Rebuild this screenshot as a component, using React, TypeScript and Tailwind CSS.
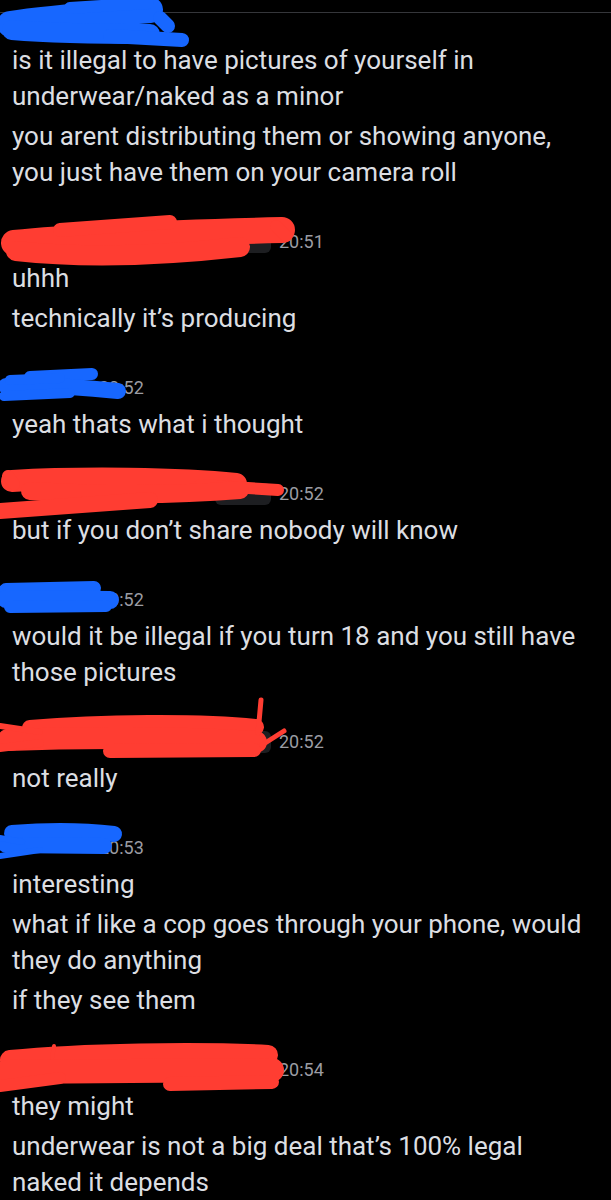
import React from "react";

type Group = {
  tone: "blue" | "red";
  time: string;
  // each message is a list of display lines
  messages: string[][];
};

const groups: Group[] = [
  {
    tone: "blue",
    time: "",
    messages: [
      ["is it illegal to have pictures of yourself in", "underwear/naked as a minor"],
      ["you arent distributing them or showing anyone,", "you just have them on your camera roll"],
    ],
  },
  {
    tone: "red",
    time: "20:51",
    messages: [["uhhh"], ["technically it\u2019s producing"]],
  },
  {
    tone: "blue",
    time: "20:52",
    messages: [["yeah thats what i thought"]],
  },
  {
    tone: "red",
    time: "20:52",
    messages: [["but if you don\u2019t share nobody will know"]],
  },
  {
    tone: "blue",
    time: "20:52",
    messages: [["would it be illegal if you turn 18 and you still have", "those pictures"]],
  },
  {
    tone: "red",
    time: "20:52",
    messages: [["not really"]],
  },
  {
    tone: "blue",
    time: "20:53",
    messages: [
      ["interesting"],
      ["what if like a cop goes through your phone, would", "they do anything"],
      ["if they see them"],
    ],
  },
  {
    tone: "red",
    time: "20:54",
    messages: [["they might"], ["underwear is not a big deal that\u2019s 100% legal", "naked it depends"]],
  },
];

function Header({ tone, time, first }: { tone: "blue" | "red"; time: string; first: boolean }) {
  if (first) return <div className="h-[29px]" />;
  return (
    <div className="flex h-[37px] items-center">
      {tone === "blue" ? (
        <div className="w-[99px] shrink-0" />
      ) : (
        <div className="flex w-[279px] shrink-0 items-center justify-end pr-[8px]">
          <span className="h-[22px] w-[56px] rounded-[6px] bg-[#1d1e21]" />
        </div>
      )}
      <span className="text-[18px] leading-none text-[#9b9ca3]">{time}</span>
    </div>
  );
}

// Marker strokes drawn over the names
function Scribbles() {
  const blue = "#1767ff";
  const red = "#ff3d32";
  const s = { fill: "none", strokeLinecap: "round" as const, strokeLinejoin: "round" as const };
  return (
    <svg className="pointer-events-none absolute left-0 top-0" width={611} height={1200} viewBox="0 0 611 1200">
      {/* top */}
      <g stroke={blue} {...s}>
        <path d="M10 24 C50 18 100 14 150 10" strokeWidth={26} />
        <path d="M70 8 L148 3" strokeWidth={12} />
        <path d="M12 30 C60 34 110 34 150 34" strokeWidth={20} />
        <path d="M110 36 L182 40" strokeWidth={14} />
        <path d="M160 18 L168 26" strokeWidth={14} />
      </g>
      {/* 20:51 */}
      <g stroke={red} {...s}>
        <path d="M14 243 C80 236 200 232 282 230" strokeWidth={26} />
        <path d="M16 251 C80 258 160 256 240 247" strokeWidth={20} />
        <path d="M60 230 L170 222" strokeWidth={14} />
        <path d="M276 226 L286 236" strokeWidth={12} />
      </g>
      {/* 20:52 blue */}
      <g stroke={blue} {...s}>
        <path d="M30 377 L92 374" strokeWidth={12} />
        <path d="M6 386 C40 385 80 387 118 391" strokeWidth={16} />
        <path d="M4 396 L70 393" strokeWidth={10} />
        <path d="M10 380 L60 378" strokeWidth={10} />
      </g>
      {/* 20:52 red */}
      <g stroke={red} {...s}>
        <path d="M12 481 C80 477 180 478 236 484" strokeWidth={22} />
        <path d="M200 485 L278 490" strokeWidth={12} />
        <path d="M30 491 C100 495 180 495 240 490" strokeWidth={18} />
        <path d="M0 511 L150 500" strokeWidth={16} />
        <path d="M8 476 L14 484" strokeWidth={12} />
      </g>
      {/* 20:52 blue */}
      <g stroke={blue} {...s}>
        <path d="M6 590 L94 588" strokeWidth={14} />
        <path d="M6 599 L110 600" strokeWidth={18} />
        <path d="M10 607 L106 606" strokeWidth={12} />
      </g>
      {/* 20:52 red */}
      <g stroke={red} {...s}>
        <path d="M30 728 C100 722 200 721 256 727" strokeWidth={16} />
        <path d="M8 740 C80 737 180 737 256 742" strokeWidth={22} />
        <path d="M110 751 L254 750" strokeWidth={14} />
        <path d="M0 726 L40 732" strokeWidth={6} />
        <path d="M0 748 L40 743" strokeWidth={8} />
        <path d="M258 733 L261 700" strokeWidth={5} />
        <path d="M262 745 L284 731" strokeWidth={5} />
      </g>
      {/* 20:53 */}
      <g stroke={blue} {...s}>
        <path d="M12 833 C50 830 80 830 114 834" strokeWidth={16} />
        <path d="M6 845 L104 846" strokeWidth={16} />
        <path d="M0 838 L22 842" strokeWidth={6} />
        <path d="M0 856 L40 850" strokeWidth={6} />
      </g>
      {/* 20:54 */}
      <g stroke={red} {...s}>
        <path d="M10 1060 C80 1053 200 1051 268 1055" strokeWidth={20} />
        <path d="M6 1072 L272 1070" strokeWidth={24} />
        <path d="M0 1086 L60 1078" strokeWidth={12} />
        <path d="M170 1084 L272 1082" strokeWidth={14} />
        <path d="M52 1058 L54 1046" strokeWidth={4} />
      </g>
    </svg>
  );
}

export default function App() {
  return (
    <div
      className="relative h-[1200px] w-[611px] overflow-hidden bg-black"
      style={{ fontFamily: "Roboto, 'Noto Sans', sans-serif" }}
    >
      <div className="mt-[12px] h-px bg-[#35363a]" />
      <div className="flex flex-col gap-[33px]">
        {groups.map((g, gi) => (
          <div key={gi} className="flex flex-col">
            <Header tone={g.tone} time={g.time} first={gi === 0} />
            <div className="flex flex-col gap-[4px] pl-[12px]">
              {g.messages.map((m, mi) => (
                <div key={mi} className="text-[26px] leading-[36px] text-[#dcdee2]">
                  {m.map((line, li) => (
                    <div key={li} className="whitespace-nowrap">
                      {line}
                    </div>
                  ))}
                </div>
              ))}
            </div>
          </div>
        ))}
      </div>
      <Scribbles />
    </div>
  );
}
